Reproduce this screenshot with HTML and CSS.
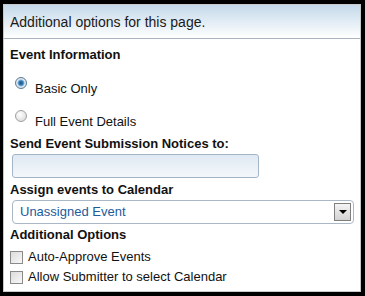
FILE: index.html
```html
<!DOCTYPE html>
<html lang="en">
<head>
    <meta charset="UTF-8">
    <title>Additional options</title>
    <link rel="stylesheet" href="styles.css">
</head>
<body>
    <div class="panel">
        <div class="panel-header">Additional options for this page.</div>

        <div class="panel-body">
            <div class="section-title first">Event Information</div>

            <label class="radio-row first">
                <input type="radio" name="info" checked>
                <span>Basic Only</span>
            </label>
            <label class="radio-row">
                <input type="radio" name="info">
                <span>Full Event Details</span>
            </label>

            <div class="section-title">Send Event Submission Notices to:</div>
            <input type="text" class="notice-input">

            <div class="section-title">Assign events to Calendar</div>
            <div class="select">
                <span class="select-value">Unassigned Event</span>
                <span class="select-arrow"></span>
            </div>

            <div class="section-title tight">Additional Options</div>
            <label class="check-row first">
                <input type="checkbox">
                <span>Auto-Approve Events</span>
            </label>
            <label class="check-row">
                <input type="checkbox">
                <span>Allow Submitter to select Calendar</span>
            </label>
        </div>
    </div>
</body>
</html>
```

FILE: styles.css
```css
body {
    margin: 0;
    padding: 0;
    background-color: #000;
    font-family: Arial, "Liberation Sans", sans-serif;
    font-size: 13px;
    line-height: 16px;
    color: #111;
}

.panel {
    margin: 4px 4px 4px 3px;
    height: 286px;
    background: white;
    border: 1px solid #c9c9c9;
}

.panel-header {
    height: 31px;
    line-height: 31px;
    padding: 2px 0 0 6px;
    font-size: 14px;
    color: #1a1a1a;
    background: linear-gradient(to bottom, #c4d9ea, #ffffff);
    border-bottom: 1px solid #a8b4bf;
}

.panel-body {
    padding: 0 6px;
}

.section-title {
    font-weight: bold;
    margin-top: 6px;
}

.section-title.first {
    margin-top: 8px;
}

.section-title.tight {
    margin-top: 3px;
}

.radio-row {
    display: flex;
    align-items: flex-start;
    margin-top: 13px;
    margin-left: 5px;
}

.radio-row.first {
    margin-top: 14px;
}

.radio-row span {
    margin-top: 4px;
}

.radio-row input {
    appearance: none;
    width: 12px;
    height: 12px;
    margin: 0 8px 0 0;
    border-radius: 50%;
    border: 1px solid #a0a0a0;
    background: radial-gradient(circle at 40% 35%, #ffffff, #d4d4d4);
    box-sizing: border-box;
}

.radio-row input:checked {
    border-color: #5a7a96;
    background: radial-gradient(circle at 50% 50%, #1c5a8e 0, #2f77b0 2px, #7fb0d6 3px, #e8eef4 4px, #c8d2dc 6px);
}

.notice-input {
    display: block;
    margin: 2px 0 0 2px;
    width: 247px;
    height: 24px;
    box-sizing: border-box;
    border: 1px solid #a3b6c8;
    border-radius: 3px;
    background: linear-gradient(to bottom, #dfe9f2, #f3f7fa);
}

.section-title + .select {
    margin-top: 2px;
}

.notice-input + .section-title {
    margin-top: 4px;
}

.select {
    display: flex;
    align-items: center;
    justify-content: space-between;
    margin-left: 2px;
    width: 342px;
    height: 24px;
    box-sizing: border-box;
    border: 1px solid #a9b8c6;
    border-radius: 4px;
    padding: 0 2px 0 7px;
    background: white;
}

.select-value {
    color: #1d5b9b;
}

.select-arrow {
    width: 17px;
    height: 18px;
    box-sizing: border-box;
    border: 1px solid #7f7f7f;
    background: linear-gradient(to bottom, #f4f4f4, #d2d2d2);
    display: flex;
    align-items: center;
    justify-content: center;
}

.select-arrow::after {
    content: "";
    border-left: 4px solid transparent;
    border-right: 4px solid transparent;
    border-top: 4px solid #000;
}

.check-row {
    display: flex;
    align-items: center;
    margin-top: 4px;
}

.check-row.first {
    margin-top: 6px;
}

.check-row input {
    appearance: none;
    width: 13px;
    height: 13px;
    margin: 0 5px 0 0;
    box-sizing: border-box;
    border: 1px solid #8a8a8a;
    background: linear-gradient(135deg, #dcdcdc, #f8f8f8);
}
```
